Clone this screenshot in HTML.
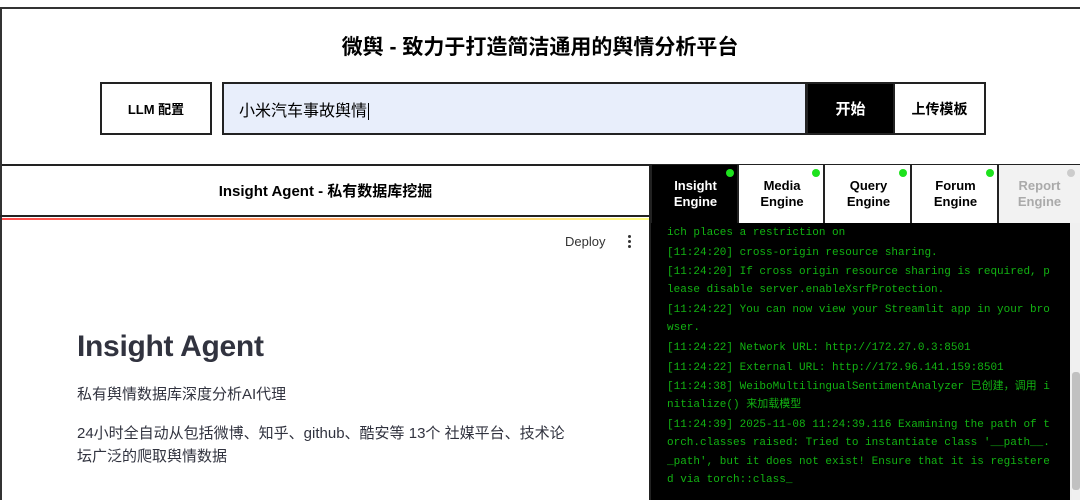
<!DOCTYPE html>
<html><head><meta charset="utf-8"><style>
*{margin:0;padding:0;box-sizing:border-box}
body{width:1080px;height:500px;overflow:hidden;background:#fff;position:relative;font-family:"Liberation Sans","Noto Sans CJK SC",sans-serif;color:#000}
.a{position:absolute}
.btn{position:absolute;border:2px solid #222;display:flex;align-items:center;justify-content:center;font-weight:bold;font-size:14px}
.tab{position:absolute;top:165px;height:58px;border-left:2px solid #222;text-align:center;font-weight:bold;font-size:13px;line-height:16px;padding-top:13px}
.dot{position:absolute;top:4px;right:5px;width:8px;height:8px;border-radius:50%;background:#1de21d}
.log{position:absolute;left:667px;font-family:"Liberation Mono","Noto Sans CJK SC",monospace;font-size:11px;color:#12b312;white-space:pre;line-height:13px}
</style></head><body>
<div class="a" style="left:0;top:7px;width:1080px;height:159px;border-top:2px solid #333;border-left:2px solid #333;border-bottom:2px solid #222"></div>
<div class="a" style="left:0;top:31px;width:1080px;text-align:center;font-size:21px;font-weight:bold">微舆 - 致力于打造简洁通用的舆情分析平台</div>
<div class="btn" style="left:100px;top:82px;width:112px;height:53px;font-size:13px">LLM 配置</div>
<div class="a" style="left:222px;top:82px;width:585px;height:53px;border:2px solid #222;background:#e8eefb;font-size:16px;padding:13px 0 0 15px">小米汽车事故舆情<span style="border-left:1px solid #000;margin-left:1px"></span></div>
<div class="btn" style="left:806px;top:82px;width:89px;height:53px;background:#000;color:#fff;font-size:15px">开始</div>
<div class="btn" style="left:893px;top:82px;width:93px;height:53px">上传模板</div>
<div class="a" style="left:0;top:164px;width:651px;height:336px;border-left:2px solid #333"></div>
<div class="a" style="left:0;top:165px;width:651px;height:52px;border-bottom:2px solid #222;display:flex;align-items:center;justify-content:center;font-weight:bold;font-size:15px">Insight Agent - 私有数据库挖掘</div>
<div class="a" style="left:2px;top:218px;width:648px;height:2px;background:linear-gradient(90deg,#ff4b4b,#fffd80)"></div>
<div class="a" style="left:565px;top:234px;font-size:13px;color:#333">Deploy</div>
<div class="a" style="left:628px;top:235px;width:3px;height:3px;border-radius:50%;background:#333;box-shadow:0 5px 0 #333,0 10px 0 #333"></div>
<div class="a" style="left:77px;top:330px;font-size:30px;font-weight:bold;color:#31333f;letter-spacing:-0.3px">Insight Agent</div>
<div class="a" style="left:77px;top:383px;font-size:15px;color:#31333f">私有舆情数据库深度分析AI代理</div>
<div class="a" style="left:77px;top:422px;width:500px;font-size:15px;line-height:23px;color:#31333f">24小时全自动从包括微博、知乎、github、酷安等 13个 社媒平台、技术论坛广泛的爬取舆情数据</div>
<div class="a" style="left:650px;top:223px;width:420px;height:277px;background:#000"></div>
<div class="a" style="left:649px;top:164px;width:2px;height:336px;background:#222"></div>
<div class="a" style="left:1070px;top:223px;width:10px;height:277px;background:#f0f0f0"></div>
<div class="a" style="left:1072px;top:372px;width:8px;height:118px;background:#c1c1c1;border-radius:3px"></div>
<div class="tab" style="left:650px;width:89px;background:#000;color:#fff">Insight<br>Engine<div class="dot"></div></div>
<div class="tab" style="left:737px;width:88px;background:#fff">Media<br>Engine<div class="dot"></div></div>
<div class="tab" style="left:823px;width:89px;background:#fff">Query<br>Engine<div class="dot"></div></div>
<div class="tab" style="left:910px;width:89px;background:#fff">Forum<br>Engine<div class="dot"></div></div>
<div class="tab" style="left:997px;width:83px;background:#f2f2f2;color:#aaa">Report<br>Engine<div class="dot" style="background:#ccc"></div></div>
<div class="log" style="top:227px">ich places a restriction on</div>
<div class="log" style="top:247px">[11:24:20] cross-origin resource sharing.</div>
<div class="log" style="top:266px">[11:24:20] If cross origin resource sharing is required, p</div>
<div class="log" style="top:284px">lease disable server.enableXsrfProtection.</div>
<div class="log" style="top:304px">[11:24:22] You can now view your Streamlit app in your bro</div>
<div class="log" style="top:322px">wser.</div>
<div class="log" style="top:342px">[11:24:22] Network URL: http://172.27.0.3:8501</div>
<div class="log" style="top:362px">[11:24:22] External URL: http://172.96.141.159:8501</div>
<div class="log" style="top:381px">[11:24:38] WeiboMultilingualSentimentAnalyzer 已创建，调用 i</div>
<div class="log" style="top:399px">nitialize() 来加载模型</div>
<div class="log" style="top:419px">[11:24:39] 2025-11-08 11:24:39.116 Examining the path of t</div>
<div class="log" style="top:437px">orch.classes raised: Tried to instantiate class '__path__.</div>
<div class="log" style="top:456px">_path', but it does not exist! Ensure that it is registere</div>
<div class="log" style="top:474px">d via torch::class_</div>
</body></html>
